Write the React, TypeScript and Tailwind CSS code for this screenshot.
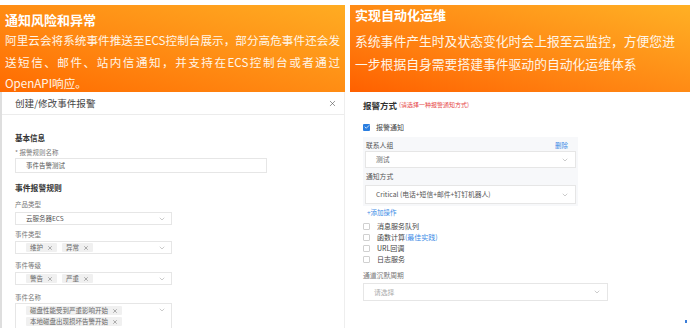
import { X, ChevronDown, Check } from "lucide-react";

const cjk = { fontFamily: '"Noto Sans CJK SC", "Noto Sans", sans-serif' };

function Chevron() {
  return <ChevronDown size={8} strokeWidth={1.5} className="text-[#999]" />;
}

function Tag({ text }: { text: string }) {
  return (
    <span className="flex h-[9px] items-center gap-[4px] rounded-[1px] bg-[#f0f0f0] px-[4px] text-[6.5px] leading-none text-[#666]">
      {text}
      <X size={6} strokeWidth={2} className="text-[#666]" />
    </span>
  );
}

function Label({ text, className = "" }: { text: string; className?: string }) {
  return <div className={`h-[12px] text-[6.5px] leading-[12px] text-[#777] ${className}`}>{text}</div>;
}

function LeftModal() {
  return (
    <div className="flex flex-1 flex-col border-l-[2px] border-r border-[#dedede] border-r-[#eeeeee] bg-white">
      <div className="flex h-[23px] items-center justify-between border-b border-[#ececec] pl-[13px] pr-[7px]">
        <span className="text-[9.6px] text-[#444]">创建/修改事件报警</span>
        <X size={9} strokeWidth={1.6} className="text-[#555]" />
      </div>
      <div className="flex flex-col pl-[13px] pt-[17px]">
        <div className="h-[12px] text-[7.5px] font-bold leading-[12px] text-[#333]">基本信息</div>
        <Label text="* 报警规则名称" className="mt-[2px] text-[5.5px]" />
        <div className="flex h-[15px] w-[252px] items-center border border-[#e6e6e6] pl-[10px] text-[6.5px] text-[#555]">
          事件告警测试
        </div>
        <div className="mt-[9px] h-[12px] text-[7.8px] font-bold leading-[12px] text-[#333]">事件报警规则</div>
        <Label text="产品类型" className="mt-[4px]" />
        <div className="mt-[2px] flex h-[13px] w-[157px] items-center justify-between border border-[#e6e6e6] pl-[10px] pr-[5px] text-[6.5px] text-[#555]">
          云服务器ECS
          <Chevron />
        </div>
        <Label text="事件类型" className="mt-[3px]" />
        <div className="mt-[1px] flex h-[13px] w-[157px] items-center justify-between border border-[#e6e6e6] pl-[10px] pr-[5px]">
          <div className="flex gap-[5px]">
            <Tag text="维护" />
            <Tag text="异常" />
          </div>
          <Chevron />
        </div>
        <Label text="事件等级" className="mt-[5px]" />
        <div className="mt-[1px] flex h-[13px] w-[157px] items-center justify-between border border-[#e6e6e6] pl-[10px] pr-[5px]">
          <div className="flex gap-[5px]">
            <Tag text="警告" />
            <Tag text="严重" />
          </div>
          <Chevron />
        </div>
        <Label text="事件名称" className="mt-[6px]" />
        <div className="flex h-[26px] w-[157px] items-start justify-between border border-[#e6e6e6] pl-[10px] pr-[5px] pt-[2px]">
          <div className="flex flex-col gap-[2px]">
            <Tag text="磁盘性能受到严重影响开始" />
            <Tag text="本地磁盘出现损坏告警开始" />
          </div>
          <Chevron />
        </div>
      </div>
    </div>
  );
}

function Box({ checked }: { checked?: boolean }) {
  return checked ? (
    <span className="flex h-[7px] w-[7px] items-center justify-center rounded-[1px] bg-[#2a7ee0]">
      <Check size={6} strokeWidth={3} className="text-white" />
    </span>
  ) : (
    <span className="h-[7px] w-[7px] rounded-[1px] border border-[#d0d0d0] bg-white" />
  );
}

function RightPanel() {
  const items: [string, string?][] = [["消息服务队列"], ["函数计算", "(最佳实践)"], ["URL回调"], ["日志服务"]];
  return (
    <div className="relative flex flex-1 flex-col bg-white pl-[13px] pt-[7px]">
      <div className="flex h-[12px] items-center gap-[2px] leading-[12px]">
        <span className="text-[8.5px] font-bold text-[#333]">报警方式</span>
        <span className="text-[6px] text-[#e64545]">(请选择一种报警通知方式)</span>
      </div>
      <div className="mt-[10px] flex h-[12px] items-center gap-[6px]">
        <Box checked />
        <span className="text-[7px] text-[#444]">报警通知</span>
      </div>
      <div className="mt-[4px] flex w-[215px] flex-col bg-[#f7f8fa] px-[2px] pb-[2px] pt-[2px]">
        <div className="flex h-[12px] items-center justify-between pl-[1px] pr-[8px] leading-[12px]">
          <span className="text-[6.8px] text-[#555]">联系人组</span>
          <span className="text-[6.5px] text-[#3b8be6]">删除</span>
        </div>
        <div className="flex h-[17px] items-center justify-between border border-[#e6e6e6] bg-white pl-[10px] pr-[6px] text-[6.8px] text-[#666]">
          测试
          <Chevron />
        </div>
        <div className="mt-[2px] h-[12px] pl-[1px] text-[6.8px] leading-[12px] text-[#555]">通知方式</div>
        <div className="mt-[3px] flex h-[19px] items-center justify-between border border-[#e6e6e6] bg-white pl-[10px] pr-[6px] text-[6.8px] text-[#555]">
          Critical (电话+短信+邮件+钉钉机器人)
          <Chevron />
        </div>
      </div>
      <div className="h-[12px] pl-[4px] text-[6.5px] leading-[12px] text-[#3b8be6]">+添加操作</div>
      <div className="mt-[3px] flex flex-col">
        {items.map(([t, link]) => (
          <div key={t} className="flex h-[11px] items-center gap-[7px]">
            <Box />
            <span className="text-[7px] text-[#444]">
              {t}
              {link && <span className="text-[#3b8be6]">{link}</span>}
            </span>
          </div>
        ))}
      </div>
      <div className="mt-[4px] h-[12px] text-[6.8px] leading-[12px] text-[#777]">通道沉默周期</div>
      <div className="mt-[2px] flex h-[18px] w-[245px] items-center justify-between border border-[#e6e6e6] pl-[10px] pr-[6px] text-[6.8px] text-[#aaa]">
        请选择
        <Chevron />
      </div>
      <span className="absolute bottom-[5px] right-[3px] h-[3px] w-[2px] bg-[#3b7dd8]" />
    </div>
  );
}

export default function App() {
  return (
    <div className="flex h-[328px] w-[691px] gap-[5px] overflow-hidden bg-white pt-[5px]" style={cjk}>
      <div className="flex w-[345px] flex-col">
        <div className="h-[87px] bg-linear-to-tr from-[#ff6a00] to-[#ffac22] px-[5px] pt-[5px] text-white">
          <div className="text-[13px] font-bold leading-[20px]">通知风险和异常</div>
          <p className="text-justify text-[11.6px] leading-[21.5px] text-[#fff5e8]">
            阿里云会将系统事件推送至ECS控制台展示，部分高危事件还会发送短信、邮件、站内信通知，并支持在ECS控制台或者通过OpenAPI响应。
          </p>
        </div>
        <LeftModal />
      </div>
      <div className="flex w-[340px] flex-col">
        <div className="h-[87px] bg-linear-to-tr from-[#ff6000] to-[#ffb024] pl-[5px] pr-[5px] text-white">
          <div className="text-[13px] font-bold leading-[20px]">实现自动化运维</div>
          <p className="mt-[3.5px] text-[12.8px] leading-[23px] text-[#fff5e8]">
            系统事件产生时及状态变化时会上报至云监控，方便您进一步根据自身需要搭建事件驱动的自动化运维体系
          </p>
        </div>
        <RightPanel />
      </div>
    </div>
  );
}
